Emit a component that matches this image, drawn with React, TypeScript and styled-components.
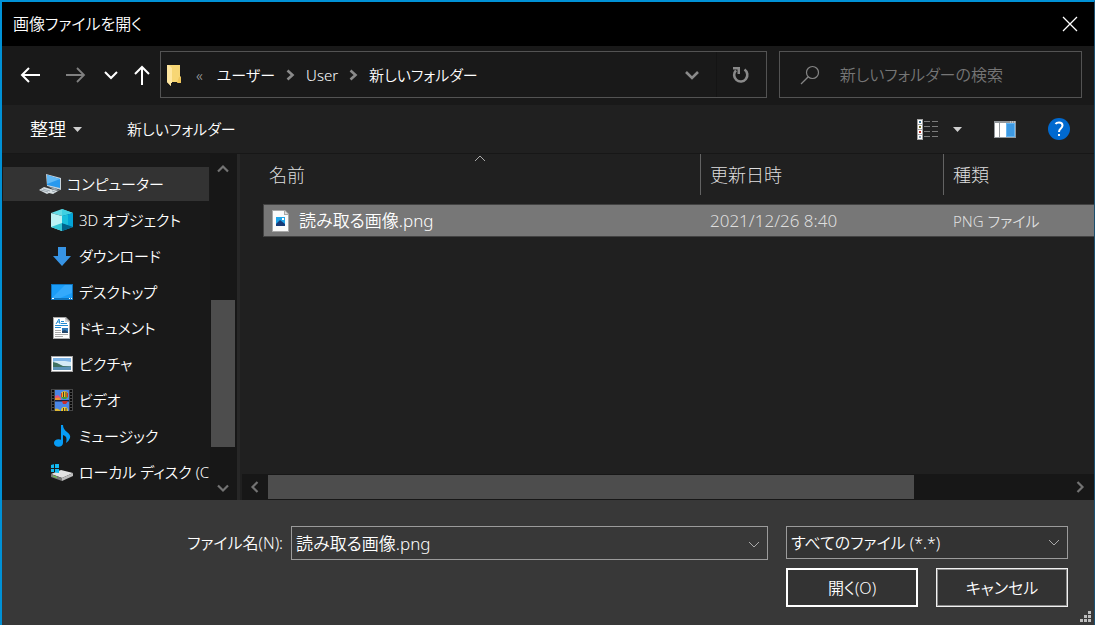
import React from "react";
import styled, { createGlobalStyle } from "styled-components";

const GlobalStyle = createGlobalStyle`
  *, *::before, *::after { box-sizing: border-box; }
  body { margin: 0; background: #202020; }
  body, button, input, select, table {
    font-family: "Noto Sans", "Noto Sans CJK JP", sans-serif;
    font-size: 16px;
    font-weight: 350;
    line-height: 24px;
    font-feature-settings: "palt";
    color: #fff;
  }
  button { background: none; border: 0; padding: 0; margin: 0; }
  svg { display: block; flex: none; }
`;

const Dialog = styled.div`
  display: flex;
  flex-direction: column;
  min-height: 100vh;
  border: solid #0091d6;
  border-width: 2px 1px 0 2px;
  border-right-color: #1c5070;
  background: #202020;
`;

const TitleBar = styled.header`
  display: flex;
  align-items: center;
  justify-content: space-between;
  height: 44px;
  padding: 0 16px 0 11px;
  background: #000;
`;

const Title = styled.h1`
  margin: 0;
  font-size: 16px;
  font-weight: 350;
`;

const IconButton = styled.button`
  display: flex;
  align-items: center;
  justify-content: center;
`;

const NavBar = styled.nav`
  display: grid;
  grid-template-columns: 128px minmax(0, 2fr) minmax(0, 1fr);
  align-items: center;
  gap: 12px;
  height: 59px;
  padding: 0 12px 2px 18px;
  background: #191919;
`;

const NavButtons = styled.div`
  display: flex;
  align-items: center;
  gap: 14px;
`;

const AddressBar = styled.div`
  display: flex;
  align-items: stretch;
  height: 47px;
  border: 1px solid #535353;
`;

const Crumbs = styled.div`
  display: flex;
  flex: 1;
  align-items: center;
  gap: 11px;
  min-width: 0;
  padding: 0 16px 0 5px;
  font-size: 15px;
`;

const Crumb = styled.a`
  color: #fff;
  text-decoration: none;
  white-space: nowrap;
`;

const Overflow = styled.span`
  margin: 0 3px;
  color: #aaa;
`;

const HistoryButton = styled(IconButton)`
  margin-left: auto;
`;

const RefreshButton = styled(IconButton)`
  width: 50px;
  border-left: 1px solid #141414;
`;

const SearchBox = styled.label`
  display: flex;
  align-items: center;
  gap: 20px;
  height: 47px;
  padding: 0 20px;
  border: 1px solid #535353;
`;

const SearchInput = styled.input`
  flex: 1;
  min-width: 0;
  padding: 0;
  border: 0;
  outline: 0;
  background: none;
  &::placeholder { color: #767676; opacity: 1; }
`;

const Toolbar = styled.div`
  display: flex;
  align-items: center;
  gap: 45px;
  height: 49px;
  padding: 0 24px 0 28px;
  border-bottom: 1px solid #171717;
`;

const ToolButton = styled.button<{ $menu?: boolean }>`
  display: flex;
  align-items: center;
  gap: 7px;
  font-size: ${(p) => (p.$menu ? 18 : 15)}px;
`;

const ToolIcons = styled.div`
  display: flex;
  align-items: center;
  gap: 32px;
  margin-left: auto;
`;

const ViewButton = styled(IconButton)`
  gap: 15px;
`;

const Body = styled.div`
  display: flex;
  flex: 1;
  min-height: 346px;
`;

const Sidebar = styled.aside`
  display: flex;
  width: 238px;
  background: #191919;
  border-right: 3px solid #272727;
`;

const Tree = styled.ul`
  flex: 1;
  min-width: 0;
  margin: 0;
  padding: 12px 1px 0 1px;
  list-style: none;
`;

const TreeItem = styled.a<{ $root?: boolean }>`
  display: flex;
  align-items: center;
  gap: 6px;
  height: 36px;
  padding-left: ${(p) => (p.$root ? 36 : 48)}px;
  border: solid transparent;
  border-width: 1px 0;
  background: ${(p) => (p.$root ? "#333" : "transparent")};
  background-clip: padding-box;
  color: #fff;
  font-size: 15px;
  text-decoration: none;
  white-space: nowrap;
  overflow: hidden;
`;

const VScroll = styled.div`
  display: flex;
  flex-direction: column;
  align-items: center;
  width: 27px;
  padding: 9px 2px 6px 1px;
  background: #171717;
`;

const VTrack = styled.div`
  display: flex;
  flex: 1;
  flex-direction: column;
  width: 24px;
  margin: 4px 0;
  &::before { content: ""; flex: 121; }
  &::after { content: ""; flex: 31; }
`;

const VThumb = styled.div`
  flex: 147;
  background: #4d4d4d;
`;

const Main = styled.main`
  display: flex;
  flex: 1;
  flex-direction: column;
  min-width: 0;
  padding-left: 2px;
`;

const FileArea = styled.div`
  flex: 1;
  padding-left: 21px;
`;

const FileTable = styled.table`
  width: 100%;
  table-layout: fixed;
  border-collapse: separate;
  border-spacing: 0;
`;

const HeadCell = styled.th<{ $width?: number }>`
  position: relative;
  width: ${(p) => (p.$width ? `${p.$width}px` : "auto")};
  height: 41px;
  padding: 1px 0 0 ${(p) => (p.$width ? 9 : 6)}px;
  border-left: ${(p) => (p.$width ? "1px solid #636363" : "0")};
  color: #dedede;
  font-size: 18px;
  font-weight: 300;
  text-align: left;
`;

const SortMark = styled.svg`
  position: absolute;
  top: 1px;
  left: 50%;
  margin-left: -8px;
`;

const Spacer = styled.tr`
  height: 9px;
`;

const Cell = styled.td<{ $name?: boolean; $kind?: boolean }>`
  height: 33px;
  padding: 0 0 0 ${(p) => (p.$name ? 8 : 10)}px;
  border: solid #424242;
  border-width: 1px 0 1px ${(p) => (p.$name ? 1 : 0)}px;
  background: #777;
  color: ${(p) => (p.$name ? "#fff" : "#dedede")};
  font-size: ${(p) => (p.$kind ? 15 : 17)}px;
`;

const FileName = styled.div`
  display: flex;
  align-items: center;
  gap: 10px;
`;

const HScroll = styled.div`
  display: flex;
  align-items: center;
  height: 26px;
  padding: 0 8px 0 7px;
  background: #171717;
`;

const HTrack = styled.div`
  display: flex;
  flex: 1;
  height: 24px;
  margin: 0 6px 0 7px;
  &::after { content: ""; flex: 154; }
`;

const HThumb = styled.div`
  flex: 646;
  background: #4d4d4d;
`;

const Footer = styled.footer`
  position: relative;
  display: grid;
  grid-template-columns: 281px 1fr 282px;
  grid-template-rows: 34px 39px;
  row-gap: 8px;
  padding: 26px 26px 18px 0;
  background: #383838;
`;

const FieldLabel = styled.label`
  align-self: center;
  text-align: right;
`;

const Combo = styled.div`
  display: flex;
  align-items: center;
  margin: 0 18px 0 8px;
  padding: 2px 7px 0 4px;
  border: 1px solid #9b9b9b;
`;

const ComboInput = styled.input`
  flex: 1;
  min-width: 0;
  padding: 0;
  border: 0;
  outline: 0;
  background: none;
  font-size: 17px;
`;

const SelectWrap = styled.div`
  position: relative;
  height: 33px;
`;

const Select = styled.select`
  width: 100%;
  height: 100%;
  padding: 0 28px 0 4px;
  border: 1px solid #9b9b9b;
  border-radius: 0;
  outline: 0;
  appearance: none;
  background: #333;
`;

const SelectArrow = styled.svg`
  position: absolute;
  top: 13px;
  right: 8px;
  pointer-events: none;
`;

const Actions = styled.div`
  display: grid;
  grid-column: 3;
  grid-template-columns: 1fr 1fr;
  gap: 18px;
`;

const ActionButton = styled.button<{ $primary?: boolean }>`
  border: ${(p) => (p.$primary ? "2px solid #fff" : "1px solid #f2f2f2")};
  box-shadow: ${(p) => (p.$primary ? "none" : "inset 0 0 0 1px #8c8c8c")};
  background: #333;
`;

const Grip = styled.svg`
  position: absolute;
  right: 3px;
  bottom: 3px;
`;

type Dir = "up" | "down" | "left" | "right";
const angle: Record<Dir, number> = { down: 0, left: 90, up: 180, right: 270 };

const ScrollArrow = ({ dir }: { dir: Dir }) => (
  <svg width="12" height="12" viewBox="0 0 12 12">
    <path d="M1 3.5 6 8.5 11 3.5" fill="none" stroke="#737373" strokeWidth="2.2" transform={`rotate(${angle[dir]} 6 6)`} />
  </svg>
);

const CrumbArrow = () => (
  <svg width="9" height="12" viewBox="0 0 9 12">
    <path d="M1.5 1.5 6.5 6 1.5 10.5" fill="none" stroke="#8a8a8a" strokeWidth="2.6" />
  </svg>
);

const ThinArrowPath = "M1 1 6 6 11 1";

const SmallTriangle = () => (
  <svg width="9" height="5" viewBox="0 0 9 5"><path d="M0 0H9L4.5 5Z" fill="#d0d0d0" /></svg>
);

const FolderIcon = () => (
  <svg width="16" height="22" viewBox="0 0 16 22">
    <path d="M1 1H14V12L15 13V18H5Z" fill="#f7d674" />
    <path d="M13 13H15V19H11Z" fill="#efc65c" />
    <path d="M1 1 5 5V22L1 18Z" fill="#ffe9a3" />
    <path d="M1 1H3L6 4V19H5V22L1 18Z" fill="#ffe7a0" />
  </svg>
);

const ComputerIcon = () => (
  <svg width="22" height="22" viewBox="0 0 22 22">
    <path d="M7 1 22 5V17L8 13Z" fill="#c8d3dc" />
    <path d="M8 2 21 6V15L8 12Z" fill="#2899ee" />
    <path d="M8 2 21 6 8 11Z" fill="#62baf6" />
    <path d="M10 14 16 15 21 18 15 17Z" fill="#94a3ad" />
    <path d="M0 17 5 14 15 17 19 18 14 21 10 20 8 21Z" fill="#d9e0e4" />
    <path d="M4 16 11 18M2 17 9 19M13 18 16 19" stroke="#8d9ba4" strokeWidth=".8" />
  </svg>
);

const CubeIcon = () => (
  <svg width="22" height="22" viewBox="0 0 22 22">
    <path d="M0 4 11 0 22 4 11 7Z" fill="#62dce7" />
    <path d="M11 0 22 4 11 7Z" fill="#3fd0e2" />
    <path d="M0 4 11 7V22L0 18Z" fill="#bcf2f4" />
    <path d="M0 18 11 14V22Z" fill="#35c6d5" />
    <path d="M11 7 22 4V18L11 22Z" fill="#03a4d8" />
    <path d="M11 14 22 18 11 22Z" fill="#00638b" />
    <path d="M11 7 17 5.500V16L11 14Z" fill="#18bfdc" />
  </svg>
);

const DownloadIcon = () => (
  <svg width="22" height="22" viewBox="0 0 22 22"><path d="M7 2H15V11H20L11 21 2 11H7Z" fill="#3794e5" /></svg>
);

const DesktopIcon = () => (
  <svg width="22" height="22" viewBox="0 0 22 22">
    <path d="M0 3H22V19H0Z" fill="#0d73bd" />
    <path d="M1 4H21V17H1Z" fill="#1b9df8" />
    <path d="M14 4H21V12L9 17H1Z" fill="#34a9fb" />
    <path d="M1 17.500H3M18 17.500H19M20 17.500H21" stroke="#fff" />
  </svg>
);

const DocumentIcon = () => (
  <svg width="22" height="22" viewBox="0 0 22 22">
    <path d="M2 0H15L19 4V22H2Z" fill="#a7a7a7" />
    <path d="M3 1H14V5H18V21H3Z" fill="#fff" />
    <path d="M14 1 18 5H14Z" fill="#d5d5d5" />
    <path d="M5 7 8 2 9 7M6 5H9M10 4.500H13M10 6.500H16M4 8.500H17M4 10.500H10" fill="none" stroke="#258bd1" />
    <path d="M4 13.500H10M4 15.500H10M4 17.500H17M4 19.500H12" stroke="#aaa" />
    <path d="M11 11H17V16H11Z" fill="#2f79b8" />
    <path d="M11 14 14 13 17 15V16H11Z" fill="#26486c" />
  </svg>
);

const PicturesIcon = () => (
  <svg width="22" height="22" viewBox="0 0 22 22">
    <path d="M0 3H22V19H0Z" fill="#a5a5a5" />
    <path d="M1 4H21V18H1Z" fill="#fff" />
    <path d="M2 5H20V17H2Z" fill="#7db4e6" />
    <path d="M4 8H14L20 9V13H2V9Z" fill="#d4ebf6" />
    <path d="M2 9 6 10 12 13 20 13.500V14H2Z" fill="#3f7263" />
    <path d="M2 14 20 14V17H2Z" fill="#5b93b8" />
  </svg>
);

const VideosIcon = () => (
  <svg width="22" height="22" viewBox="0 0 22 22">
    <path d="M0 0H22V22H0Z" fill="#454545" />
    <path d="M2 1V22M20 1V22" stroke="#090909" strokeWidth="2" strokeDasharray="2 1" />
    <path d="M4 1H18V22H4Z" fill="#4a86e6" />
    <path d="M4 7 7 6 9 8 10 9V11H4Z" fill="#e0527f" />
    <path d="M4 9 8 8.500 10 11H4Z" fill="#e8922f" />
    <path d="M4 11H18V12.500H4Z" fill="#14203f" />
    <circle cx="13.500" cy="6" r="3.800" fill="#efc126" />
    <path d="M10 4H11V8H10ZM16 4H17V8H16Z" fill="#d93126" />
    <path d="M12 3H13V9H12ZM14.500 3H15.500V9H14.500Z" fill="#3d3a2a" />
    <path d="M10 8H17L15 10H12Z" fill="#3d9a3e" />
    <path d="M11 12H17L15 15H12Z" fill="#c9302c" />
    <path d="M10 22Q10 18 13.500 18T17 22Z" fill="#f0cd27" />
    <path d="M4 20 6 19.500 9 21V22H4Z" fill="#ddb834" />
    <path d="M12 19H13V22H12ZM14.500 19H15.500V22H14.500Z" fill="#463529" />
  </svg>
);

const MusicIcon = () => (
  <svg width="22" height="22" viewBox="0 0 22 22">
    <ellipse cx="7.500" cy="18" rx="4.500" ry="3.800" fill="#079cf5" />
    <path d="M10 0H12Q12 4 16 7 20 10 19 13 18 16 15 18 17 11 12 10V18H10Z" fill="#079cf5" />
  </svg>
);

const DiskIcon = () => (
  <svg width="22" height="22" viewBox="0 0 22 22">
    <path d="M0 4 3 3.500V7H0ZM4 3.300 8 3V7H4ZM0 8H3V11H0ZM4 8H8V12L4 11.500Z" fill="#12b9f1" />
    <path d="M0 13 10 9 22 12 11 17Z" fill="#e3e3e3" />
    <path d="M0 4 3 3.500V7H0ZM4 3.300 8 3V7H4ZM0 8H3V11H0ZM4 8H8V12L4 11.500Z" fill="#12b9f1" />
    <path d="M0 13 11 17V20L0 16Z" fill="#777" />
    <path d="M11 17 22 12V15L11 20Z" fill="#bcbcbc" />
    <path d="M2 15 6 16.500" stroke="#6bd33f" />
  </svg>
);

const ImageFileIcon = () => (
  <svg width="17" height="22" viewBox="0 0 17 22">
    <path d="M0 0H13L17 4V22H0Z" fill="#a8a8a8" />
    <path d="M1 1H12V5H16V21H1Z" fill="#fafafa" />
    <path d="M13 1 16 4H13Z" fill="#ddd" />
    <path d="M4 7H13V16H4Z" fill="#20a4e8" />
    <path d="M4 14 8 10 13 14V16H4Z" fill="#173b78" />
    <path d="M10 8H12V10H10Z" fill="#fff" />
  </svg>
);

const ViewIcon = () => (
  <svg width="21" height="21" viewBox="0 0 21 21">
    <path d="M0 0H6V21H0Z" fill="#a4a4a4" />
    <path d="M1 1H5V5H1ZM1 6H5V10H1ZM1 11H5V15H1ZM1 16H5V20H1Z" fill="#fff" />
    <path d="M2 2H4V4H2Z" fill="#3b708f" />
    <path d="M2 7H4V9H2Z" fill="#76702a" />
    <path d="M2 12H4V14H2Z" fill="#b5392c" />
    <path d="M2 17H4V19H2Z" fill="#839bb0" />
    <path d="M7 2.500H13M15 2.500H21M7 7.500H13M15 7.500H21M7 12.500H13M15 12.500H21M7 17.500H13M15 17.500H21" stroke="#7c7c7c" />
  </svg>
);

const PaneIcon = () => (
  <svg width="22" height="17" viewBox="0 0 22 17">
    <path d="M0 0H22V17H0Z" fill="#92979b" />
    <path d="M1 2H5V16H1ZM6 2H12V16H6Z" fill="#fff" />
    <path d="M12 2H21V16H12Z" fill="#64b5f2" />
    <path d="M13 3H20V15H13Z" fill="#3d99e2" />
    <path d="M16 1H17M18 1H19M20 1H21" stroke="#eee" />
  </svg>
);

const HelpIcon = () => (
  <svg width="22" height="22" viewBox="0 0 22 22">
    <circle cx="11" cy="11" r="11" fill="#0069cf" />
    <path d="M7.500 6Q8.500 4.500 11 4.500 14.500 4.500 14.500 7.600 14.500 9 12.800 10.500 11 12 11 14" fill="none" stroke="#fff" strokeWidth="2" />
    <path d="M10 16H12V18H10Z" fill="#fff" />
  </svg>
);

const places = [
  { name: "コンピューター", Icon: ComputerIcon },
  { name: "3D オブジェクト", Icon: CubeIcon },
  { name: "ダウンロード", Icon: DownloadIcon },
  { name: "デスクトップ", Icon: DesktopIcon },
  { name: "ドキュメント", Icon: DocumentIcon },
  { name: "ピクチャ", Icon: PicturesIcon },
  { name: "ビデオ", Icon: VideosIcon },
  { name: "ミュージック", Icon: MusicIcon },
  { name: "ローカル ディスク (C:)", Icon: DiskIcon },
];

export default function App() {
  return (
    <>
      <GlobalStyle />
      <Dialog>
        <TitleBar>
          <Title>画像ファイルを開く</Title>
          <IconButton aria-label="閉じる">
            <svg width="16" height="16" viewBox="0 0 16 16"><path d="M1 1 15 15M15 1 1 15" stroke="#fff" strokeWidth="1.300" /></svg>
          </IconButton>
        </TitleBar>
        <NavBar>
          <NavButtons>
            <IconButton aria-label="戻る">
              <svg width="20" height="16" viewBox="0 0 20 16"><path d="M20 8H2M9 1 2 8 9 15" fill="none" stroke="#fff" strokeWidth="2" /></svg>
            </IconButton>
            <IconButton aria-label="進む">
              <svg width="32" height="16" viewBox="-12 0 32 16"><path d="M0 8H18M11 1 18 8 11 15" fill="none" stroke="#808080" strokeWidth="1.800" /></svg>
            </IconButton>
            <IconButton aria-label="最近表示した場所">
              <svg width="20" height="10" viewBox="-4 0 20 10"><path d="M1 2 7 8 13 2" fill="none" stroke="#fff" strokeWidth="2" /></svg>
            </IconButton>
            <IconButton aria-label="上へ">
              <svg width="16" height="20" viewBox="0 0 16 20"><path d="M8 20V2M1 9 8 2 15 9" fill="none" stroke="#fff" strokeWidth="2" /></svg>
            </IconButton>
          </NavButtons>
          <AddressBar>
            <Crumbs>
              <FolderIcon />
              <Overflow>«</Overflow>
              <Crumb href="#users">ユーザー</Crumb>
              <CrumbArrow />
              <Crumb href="#user">User</Crumb>
              <CrumbArrow />
              <Crumb href="#folder">新しいフォルダー</Crumb>
              <HistoryButton aria-label="以前の場所">
                <svg width="16" height="12" viewBox="0 0 16 12"><path d="M2 3 8 9 14 3" fill="none" stroke="#8a8a8a" strokeWidth="2.600" /></svg>
              </HistoryButton>
            </Crumbs>
            <RefreshButton aria-label="更新">
              <svg width="18" height="18" viewBox="0 0 18 18">
                <path d="M12.500 3.500A6.600 6.600 0 1 1 4 4.300" fill="none" stroke="#8a8a8a" strokeWidth="2.600" />
                <path d="M1 1H8V8H5.500V3.500H1Z" fill="#8a8a8a" />
              </svg>
            </RefreshButton>
          </AddressBar>
          <SearchBox>
            <svg width="20" height="20" viewBox="0 0 20 20"><circle cx="12.500" cy="7.500" r="6" fill="none" stroke="#858585" strokeWidth="1.200" /><path d="M8.300 11.800 1 19" stroke="#858585" strokeWidth="1.300" /></svg>
            <SearchInput aria-label="検索" placeholder="新しいフォルダーの検索" />
          </SearchBox>
        </NavBar>
        <Toolbar>
          <ToolButton $menu>整理<SmallTriangle /></ToolButton>
          <ToolButton>新しいフォルダー</ToolButton>
          <ToolIcons>
            <ViewButton aria-label="表示方法"><ViewIcon /><SmallTriangle /></ViewButton>
            <IconButton aria-label="プレビュー ウィンドウ"><PaneIcon /></IconButton>
            <IconButton aria-label="ヘルプ"><HelpIcon /></IconButton>
          </ToolIcons>
        </Toolbar>
        <Body>
          <Sidebar>
            <Tree>
              {places.map(({ name, Icon }, i) => (
                <li key={name}><TreeItem href="#place" $root={i === 0}><Icon />{name}</TreeItem></li>
              ))}
            </Tree>
            <VScroll>
              <ScrollArrow dir="up" />
              <VTrack><VThumb /></VTrack>
              <ScrollArrow dir="down" />
            </VScroll>
          </Sidebar>
          <Main>
            <FileArea>
              <FileTable>
                <thead>
                  <tr>
                    <HeadCell>
                      名前
                      <SortMark width="12" height="7" viewBox="0 0 12 7"><path d="M1 6 6 1 11 6" fill="none" stroke="#aaa" /></SortMark>
                    </HeadCell>
                    <HeadCell $width={243}>更新日時</HeadCell>
                    <HeadCell $width={151}>種類</HeadCell>
                  </tr>
                </thead>
                <tbody>
                  <Spacer />
                  <tr>
                    <Cell $name><FileName><ImageFileIcon />読み取る画像.png</FileName></Cell>
                    <Cell>2021/12/26 8:40</Cell>
                    <Cell $kind>PNG ファイル</Cell>
                  </tr>
                </tbody>
              </FileTable>
            </FileArea>
            <HScroll>
              <ScrollArrow dir="left" />
              <HTrack><HThumb /></HTrack>
              <ScrollArrow dir="right" />
            </HScroll>
          </Main>
        </Body>
        <Footer>
          <FieldLabel htmlFor="file-name">ファイル名(N):</FieldLabel>
          <Combo>
            <ComboInput id="file-name" defaultValue="読み取る画像.png" />
            <IconButton aria-label="履歴">
              <svg width="12" height="7" viewBox="0 0 12 7"><path d={ThinArrowPath} fill="none" stroke="#aaa" /></svg>
            </IconButton>
          </Combo>
          <SelectWrap>
            <Select aria-label="ファイルの種類"><option>すべてのファイル (*.*)</option></Select>
            <SelectArrow width="12" height="7" viewBox="0 0 12 7"><path d={ThinArrowPath} fill="none" stroke="#aaa" /></SelectArrow>
          </SelectWrap>
          <Actions>
            <ActionButton $primary>開く(O)</ActionButton>
            <ActionButton>キャンセル</ActionButton>
          </Actions>
          <Grip width="11" height="11" viewBox="0 0 11 11">
            <path d="M8 0H11V3H8ZM4 4H7V7H4ZM8 4H11V7H8ZM0 8H3V11H0ZM4 8H7V11H4ZM8 8H11V11H8Z" fill="#bdbdbd" />
          </Grip>
        </Footer>
      </Dialog>
    </>
  );
}
